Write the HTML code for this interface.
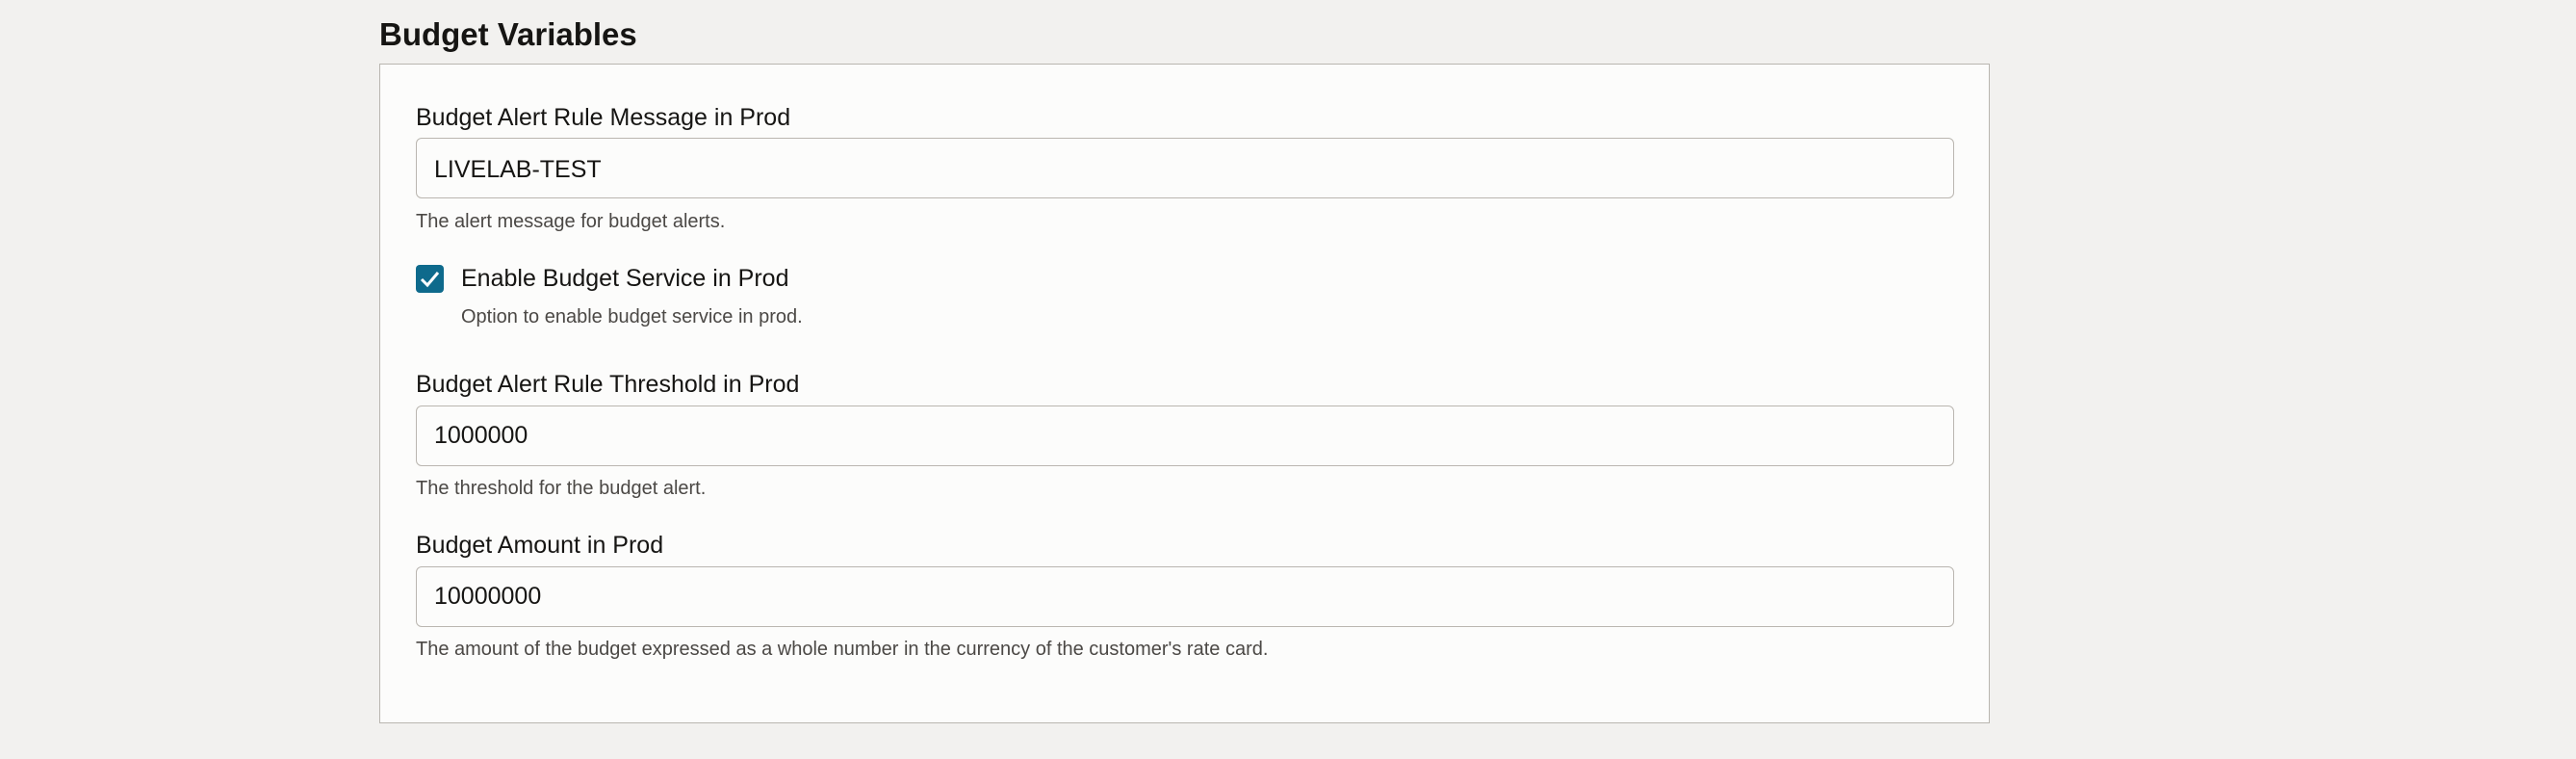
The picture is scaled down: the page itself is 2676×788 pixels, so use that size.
<!DOCTYPE html>
<html><head><meta charset="utf-8"><style>
html,body{margin:0;padding:0}
body{width:2676px;height:788px;background:#f2f1ef;position:relative;overflow:hidden;font-family:"Liberation Sans",Arial,sans-serif;color:#161513}
.a{position:absolute;white-space:nowrap;line-height:1}
.t{font-size:33px;font-weight:bold}
.l{font-size:25px}
.h{font-size:20px;color:#4b4845}
.card{position:absolute;left:394px;top:66px;width:1673px;height:685px;background:#fcfcfb;border:1px solid #b9b6b0;box-sizing:border-box}
.in{position:absolute;left:432px;width:1598px;height:63px;border:1px solid #bab6b0;border-radius:6px;background:#fcfcfb;box-sizing:border-box}
.cb{position:absolute;left:432px;top:275px;width:29px;height:29px;background:#0e6a8c;border-radius:4px}
</style></head><body>
<div class="a t" style="left:394px;top:19px">Budget Variables</div>
<div class="card"></div>
<div class="a l" style="left:432px;top:110px">Budget Alert Rule Message in Prod</div>
<div class="in" style="top:143px"></div>
<div class="a l" style="left:451px;top:164px">LIVELAB-TEST</div>
<div class="a h" style="left:432px;top:220px">The alert message for budget alerts.</div>
<div class="cb"><svg width="29" height="29" viewBox="0 0 29 29"><path d="M6 15 L12 21 L23 8" fill="none" stroke="#fff" stroke-width="3"/></svg></div>
<div class="a l" style="left:479px;top:277px">Enable Budget Service in Prod</div>
<div class="a h" style="left:479px;top:319px">Option to enable budget service in prod.</div>
<div class="a l" style="left:432px;top:387px">Budget Alert Rule Threshold in Prod</div>
<div class="in" style="top:421px"></div>
<div class="a l" style="left:451px;top:440px">1000000</div>
<div class="a h" style="left:432px;top:497px">The threshold for the budget alert.</div>
<div class="a l" style="left:432px;top:554px">Budget Amount in Prod</div>
<div class="in" style="top:588px"></div>
<div class="a l" style="left:451px;top:607px">10000000</div>
<div class="a h" style="left:432px;top:664px">The amount of the budget expressed as a whole number in the currency of the customer's rate card.</div>
</body></html>
